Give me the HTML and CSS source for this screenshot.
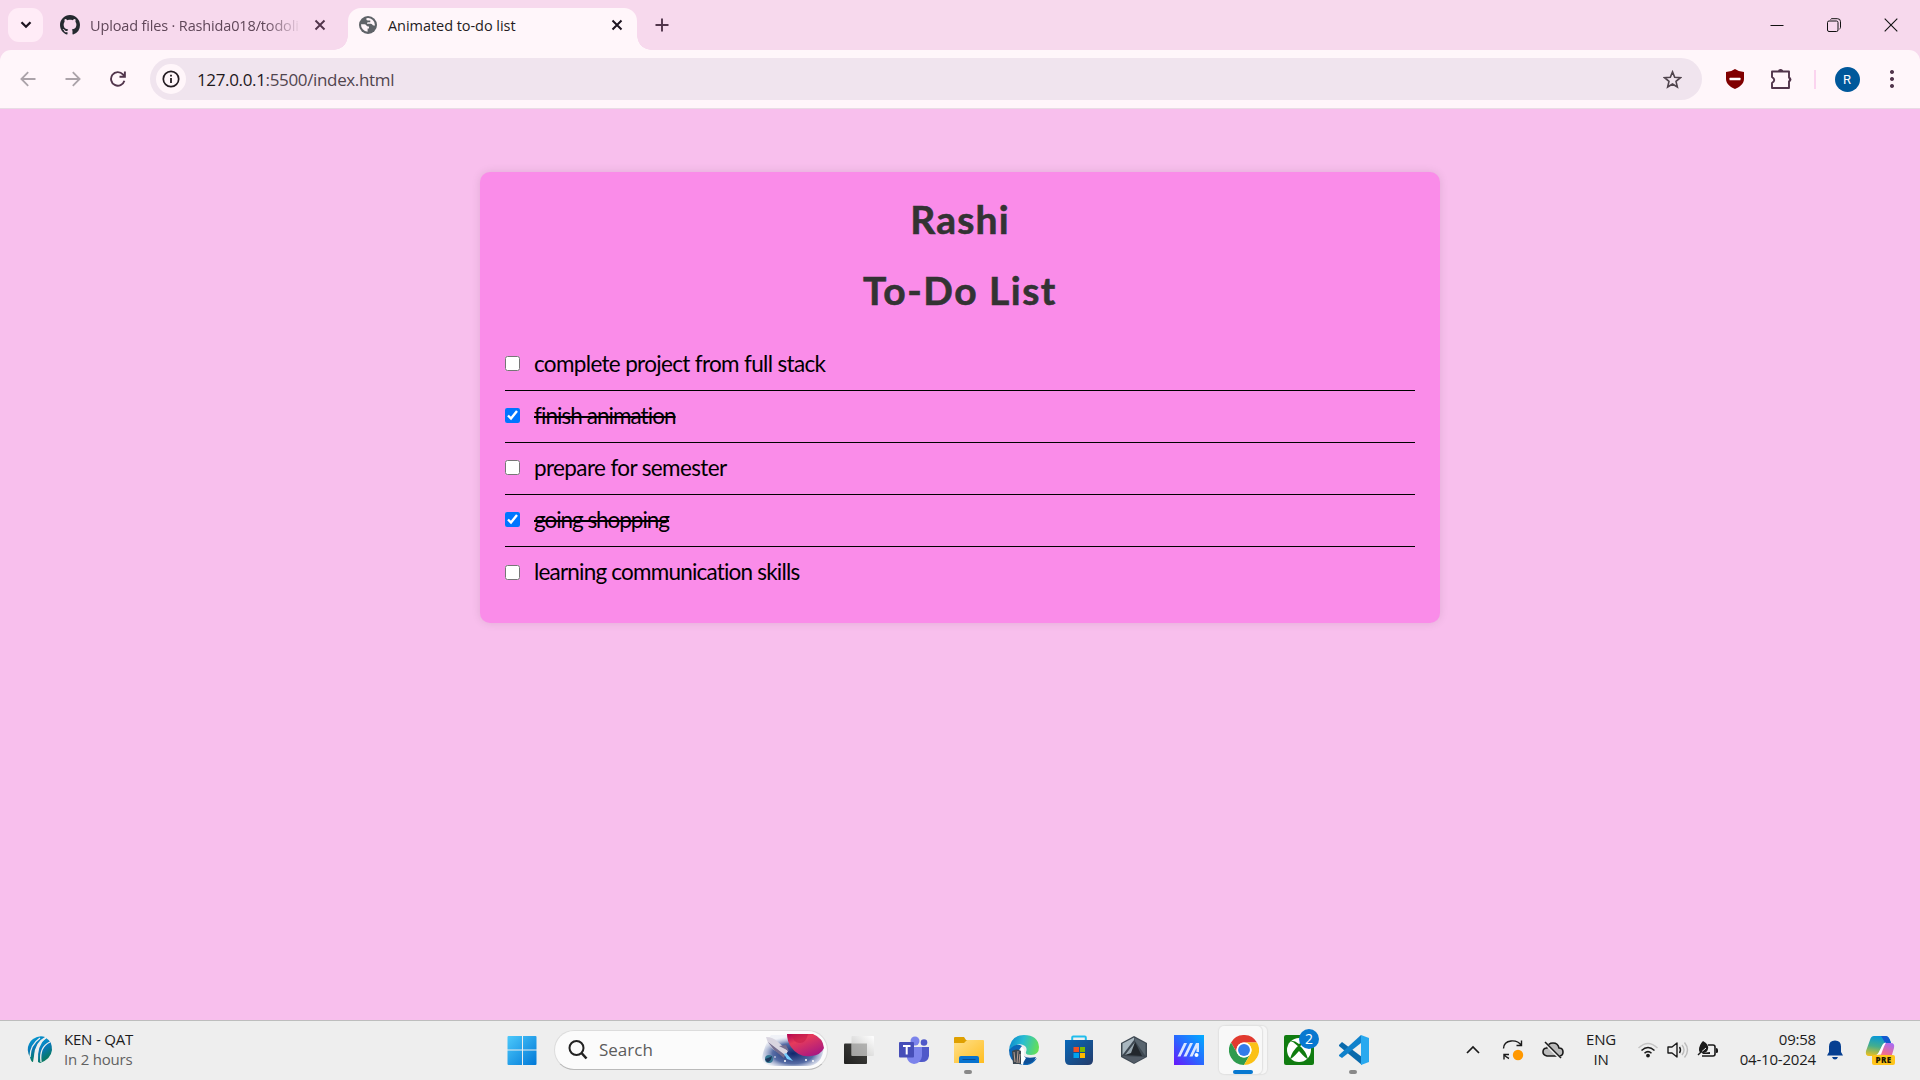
FILE: index.html
```html
<!DOCTYPE html>
<html lang="en">
<head>
<meta charset="utf-8">
<title>Animated to-do list</title>
<link rel="stylesheet" href="styles.css">
</head>
<body>
<header class="tabstrip">
  <button class="tab-search"><svg width="12" height="8" viewBox="0 0 12 8"><path d="M1.5 1.2 6 5.7l4.500-4.500" fill="none" stroke="#1d1420" stroke-width="2.300"/></svg></button>
  <div class="tab">
    <svg width="20" height="20" viewBox="0 0 16 16"><path fill="#24292f" d="M8 0C3.580 0 0 3.580 0 8c0 3.540 2.290 6.530 5.470 7.590.4.070.55-.17.55-.38 0-.19-.01-.82-.01-1.490-2.010.37-2.530-.49-2.690-.94-.09-.23-.48-.94-.82-1.130-.28-.15-.68-.52-.01-.53.63-.01 1.080.58 1.230.82.72 1.210 1.870.87 2.330.66.070-.52.28-.87.51-1.070-1.780-.2-3.640-.89-3.640-3.950 0-.87.31-1.590.82-2.150-.08-.2-.36-1.020.08-2.120 0 0 .67-.21 2.200.82.64-.18 1.320-.27 2-.27s1.360.09 2 .27c1.530-1.040 2.200-.82 2.200-.82.44 1.100.16 1.920.08 2.120.51.56.82 1.270.82 2.150 0 3.070-1.870 3.750-3.650 3.950.29.25.54.73.54 1.480 0 1.070-.01 1.930-.01 2.200 0 .21.15.46.55.38A8 8 0 0 0 16 8c0-4.420-3.580-8-8-8z"/></svg>
    <span class="tab-title tab-title-faded">Upload files · Rashida018/todoli</span>
    <svg class="tab-close" width="12" height="12" viewBox="0 0 12 12"><path d="m1.500 1.500 9 9m0-9-9 9" stroke="#51354b" stroke-width="1.900"/></svg>
  </div>
  <div class="tab tab-active">
    <svg width="18" height="18" viewBox="0 0 18 18"><circle cx="9" cy="9" r="9" fill="#5f6368"/><path d="M2 8.300h3.500c1.700 0 1.800 2.200 3.500 2.200h1v1.900H8.600v3.300A7 7 0 0 1 2 8.300zM7.400 2.300c.1 1.500-.2 2.200 1.600 2.200h2.300V6.300H9.300c-1 0-1.300.5-1.300 1.500h3.700c1.700 0 1.500 1.900 3.500 1.600h.8a7 7 0 0 0-8.600-7.100z" fill="#fff6fa"/></svg>
    <span class="tab-title tab-title-active">Animated to-do list</span>
    <svg class="tab-close" width="12" height="12" viewBox="0 0 12 12"><path d="m1.500 1.500 9 9m0-9-9 9" stroke="#1d1420" stroke-width="2"/></svg>
  </div>
  <svg class="new-tab" width="14" height="14" viewBox="0 0 14 14"><path d="M7 .5v13M.5 7h13" stroke="#51354b" stroke-width="1.900"/></svg>
  <div class="window-controls">
    <svg width="14" height="14" viewBox="0 0 14 14"><path d="M.5 7.500h13" stroke="#111"/></svg>
    <svg width="14" height="14" viewBox="0 0 14 14"><rect x=".5" y="3" width="10.500" height="10.500" rx="1.500" fill="none" stroke="#111"/><path d="M3.500 1.500Q4 .7 5 .7h5.500q3 0 3 3V9.500q0 1-1 1.500" fill="none" stroke="#111"/></svg>
    <svg width="14" height="14" viewBox="0 0 14 14"><path d="m.7.700 12.600 12.600m0-12.600L.7 13.300" stroke="#111" stroke-width="1.100"/></svg>
  </div>
</header>
<nav class="toolbar">
  <div class="nav-buttons">
    <svg width="16" height="16" viewBox="0 0 16 16"><path d="M15.500 8H2M8.200 1.200 1.400 8l6.800 6.800" fill="none" stroke="#aba3a9" stroke-width="1.800"/></svg>
    <svg width="16" height="16" viewBox="0 0 16 16"><path d="M.5 8H14M7.800 1.200 14.600 8l-6.800 6.800" fill="none" stroke="#aba3a9" stroke-width="1.800"/></svg>
    <svg width="16" height="16" viewBox="0 0 16 16"><path d="M14.400 9.800A6.800 6.800 0 1 1 12.900 3.300L14.800 5.300M14.900.4v5.400H9.500" fill="none" stroke="#51354b" stroke-width="1.900"/></svg>
  </div>
  <div class="omnibox">
    <span class="site-info"><svg width="18" height="18" viewBox="0 0 18 18"><circle cx="9" cy="9" r="7.700" fill="none" stroke="#241c22" stroke-width="1.700"/><path d="M9 8v5M9 4.800v1.800" stroke="#241c22" stroke-width="1.800"/></svg></span>
    <span class="url"><span class="host">127.0.0.1</span>:5500/index.html</span>
    <svg class="star" width="19" height="19" viewBox="0 0 20 20"><path d="m10 2 2.300 5.600 6 .5-4.600 3.900 1.400 5.900L10 14.700l-5.100 3.200 1.400-5.900-4.600-3.900 6-.5z" fill="none" stroke="#51454e" stroke-width="1.700"/></svg>
  </div>
  <div class="extensions">
    <svg width="20" height="20" viewBox="0 0 20 20"><path d="M10 0q4 3 9 3v7c0 5-5 8.500-9 10-4-1.500-9-5-9-10V3q5 0 9-3z" fill="#800000"/><rect x="4.500" y="8.800" width="11" height="2.400" rx=".5" fill="#fff"/></svg>
    <svg width="22" height="22" viewBox="0 0 22 22"><path d="M2 3.500h17v6q2 2 0 4V20H2v-5q4.500-3 0-6z" fill="none" stroke="#51354b" stroke-width="1.900" stroke-linejoin="round"/><path d="M8 3.500a2.600 2.600 0 0 1 5.200 0zM19 9a2.500 2.500 0 0 1 0 5z" fill="#51354b"/></svg>
    <i class="divider"></i>
    <span class="avatar">R</span>
    <svg class="menu-dots" width="6" height="20" viewBox="0 0 6 20"><path fill="#51354b" d="M3 1a2 2 0 1 0 .01 0zM3 8a2 2 0 1 0 .01 0zM3 15a2 2 0 1 0 .01 0z"/></svg>
  </div>
</nav>
<main class="page">
  <section class="todo">
    <h1 class="heading heading-name">Rashi</h1>
    <h1 class="heading heading-list">To-Do List</h1>
    <ul class="items">
      <li class="item"><input class="check" type="checkbox"><span class="label label-1">complete project from full stack</span></li>
      <li class="item"><input class="check" type="checkbox" checked><span class="label label-2 done">finish animation</span></li>
      <li class="item"><input class="check" type="checkbox"><span class="label label-3">prepare for semester</span></li>
      <li class="item"><input class="check" type="checkbox" checked><span class="label label-4 done">going shopping</span></li>
      <li class="item"><input class="check" type="checkbox"><span class="label label-5">learning communication skills</span></li>
    </ul>
  </section>
</main>
<footer class="taskbar">
  <div class="widget">
    <svg width="28" height="30" viewBox="0 0 28 30"><defs><linearGradient id="icc" x1="0" x2=".4" y1="0" y2="1"><stop stop-color="#05a8dc"/><stop offset=".5" stop-color="#0878b8"/><stop offset="1" stop-color="#077a55"/></linearGradient></defs><g fill="url(#icc)"><path d="M7 4Q13 0 19 2 9 7 8 21L7 27Q5 27 4 22 0 15 3 9q1-3 4-5z"/><path d="M20 3q6 3 6 12-1 9-12 13l-2-1Q11 10 20 3z"/></g><path d="M4 22Q4 10 14 3M9 26Q8 10 20 3M15 27Q13 12 24 7" fill="none" stroke="#eee" stroke-width="1.300"/></svg>
    <div class="widget-text"><span class="widget-title">KEN - QAT</span><span class="widget-sub">In 2 hours</span></div>
  </div>
  <div class="apps">
    <svg class="start" width="30" height="30" viewBox="0 0 30 30"><defs><linearGradient id="win" x1="0" y1="0" x2="1" y2="1"><stop stop-color="#4cc9fb"/><stop offset="1" stop-color="#0078d7"/></linearGradient></defs><path fill="url(#win)" d="M1.500 1H15v13.500H.5V2q0-1 1-1zM16 1h12.500q1 0 1 1v12.500H16zM.5 15.500H15V30H1.500q-1 0-1-1zM16 15.500h13.500V29q0 1-1 1H16z"/></svg>
    <div class="search">
      <svg width="20" height="20" viewBox="0 0 20 20"><circle cx="8.500" cy="8" r="7" fill="none" stroke="#222" stroke-width="2"/><path d="m13.500 13 5 5.500" stroke="#222" stroke-width="2.600"/></svg>
      <span class="search-text">Search</span>
      <svg class="space" width="64" height="34" viewBox="0 0 64 34"><defs><linearGradient id="planet" x1="0" y1="0" x2=".7" y2="1"><stop stop-color="#b00050"/><stop offset=".35" stop-color="#e63b5b"/><stop offset="1" stop-color="#a81882"/></linearGradient><radialGradient id="night" cx=".5" cy=".6" r=".55"><stop stop-color="#10266c"/><stop offset=".6" stop-color="#566ca5"/><stop offset="1" stop-color="#dce1f0" stop-opacity=".35"/></radialGradient></defs><path d="M10 2h48q5 3 5 12-2 19-17 19H14Q2 33 1 25q2-12 9-23z" fill="url(#night)"/><path d="M26 1h26q10 4 11 14-3 7-13 8-12 2-20-9-4-6-4-13z" fill="url(#planet)"/><path d="M31 1q1 9 8 9 6 0 8-9" fill="#c21b48" opacity=".55"/><path d="M5 4q7 0 12 5l10 9-3 5-11-6Q7 12 5 4z" fill="#d9d5e0"/><path d="m7 9 17 13-1 3-10-8zM18 13l7-1 3 6z" fill="#756e90"/><path d="m25 20 7 8-6-2-3-5z" fill="#75ccff"/><circle cx="8" cy="26" r="4" fill="#347894"/><path d="M4 26q4-1 7-3-1 6-5 6" fill="#1d375d"/><g fill="#fff"><circle cx="14" cy="24" r=".8"/><circle cx="24" cy="28" r="1"/><circle cx="45" cy="27" r="1"/><circle cx="52" cy="28" r="1"/></g></svg>
    </div>
    <div class="app"><svg width="32" height="32" viewBox="0 0 32 32"><defs><linearGradient id="dk" x1="1" y1="0" x2="0" y2="1"><stop stop-color="#454542"/><stop offset="1" stop-color="#20201f"/></linearGradient><linearGradient id="lt" x1="0" y1="1" x2="1" y2="0"><stop stop-color="#c4c4c3"/><stop offset="1" stop-color="#fff"/></linearGradient></defs><rect x="1" y="9.500" width="23" height="20.500" rx="1" fill="url(#dk)"/><rect x="8.500" y="2" width="22.500" height="20" rx="1" fill="url(#lt)"/><path d="M8.500 9.500H24V22H8.500z" fill="#8c8c8a" opacity=".6"/></svg></div>
    <div class="app"><svg width="30" height="30" viewBox="0 0 30 30"><circle cx="16" cy="6" r="4.500" fill="#7b83eb"/><circle cx="25" cy="7.500" r="3.300" fill="#5059c9"/><path d="M20 12h10v9q-1 6-7 6h-3z" fill="#5059c9"/><path d="M9 12h14v9q-1 7-8 8-6-1-7-6z" fill="#7b83eb"/><rect y="7" width="15" height="15.500" rx="1" fill="#464eb8"/><path d="M4 11h7.500M7.700 11v8.500" stroke="#fff" stroke-width="2"/></svg></div>
    <div class="app running"><svg width="30" height="28" viewBox="0 0 30 28"><defs><linearGradient id="fd" x1="0" y1="0" x2="1" y2="1"><stop stop-color="#ffe08a"/><stop offset="1" stop-color="#ffbd20"/></linearGradient></defs><path d="M1 1h9l2 3h17v8H0V2q0-1 1-1z" fill="#dfa000"/><path d="M0 7h10l3-3h16q1 0 1 1v22H0z" fill="url(#fd)"/><path d="M5 27v-5q0-2 2-2h16q2 0 2 2v5z" fill="#0873cf"/><path d="M8.500 23.500h13" stroke="#0b4d91"/></svg></div>
    <div class="app"><svg width="30" height="30" viewBox="0 0 30 30"><defs><linearGradient id="ed" x1="0" y1=".3" x2="1" y2=".5"><stop stop-color="#0b89ce"/><stop offset=".45" stop-color="#29bdd2"/><stop offset="1" stop-color="#64df57"/></linearGradient></defs><path d="M0 16Q1 0 15 0q14 0 15 12 0 8-8 8-6 0-5-3 2-5-3-7Q8 7 0 16z" fill="url(#ed)"/><path d="M0 15Q7 7 13 11q-8 9 1 14 8 3 14-2-5 8-13 7Q0 29 0 15z" fill="#0c67b7"/><path d="M13 15q-1 10 14 7-3 7-11 7-9-4-3-14z" fill="#0d5098"/><path d="M3 16q5-3 9 0v13H4z" fill="#3b4750"/><path d="m5 17 1 10m3-11-1 12m3-9-1 9" stroke="#c9aa9d" stroke-width=".9"/><path d="M12 12q4 1 3 6-1 3 2 5-3 4-3 7l-2-1z" fill="#fff"/></svg></div>
    <div class="app"><svg width="30" height="30" viewBox="0 0 30 30"><defs><linearGradient id="st" x1="0" y1="0" x2="1" y2="1"><stop stop-color="#0868b9"/><stop offset="1" stop-color="#243b6a"/></linearGradient></defs><path d="M8.200 6V2.500q0-1 1-1h11.600q1 0 1 1V6" fill="none" stroke="#20bdec" stroke-width="2"/><path d="M1 5h28v20q0 5-5 5H6q-5 0-5-5z" fill="url(#st)"/><path fill="#f25022" d="M9.500 12H15v5H9.500z"/><path fill="#7fba00" d="M16 12h5v5h-5z"/><path fill="#00a4ef" d="M9.500 18H15v5H9.500z"/><path fill="#ffb900" d="M16 18h5v5h-5z"/></svg></div>
    <div class="app"><svg width="30" height="30" viewBox="0 0 30 30"><path d="m15 1 13 7v14l-13 7-13-7V8z" fill="#3e4852"/><path d="M15 2.500 3.500 8.500V20L15 5z" fill="#a9b7c0"/><path d="m15 2.500 11.500 6V21L16 6z" fill="#59656f"/><path d="M16 7 6 20l17 1z" fill="#22272d"/><path d="M16 7 6 20l6-2z" fill="#98a6af"/><path d="m3 21 20 1 3 0-11 6z" fill="#535c67"/></svg></div>
    <div class="app"><svg width="30" height="30" viewBox="0 0 30 30"><defs><linearGradient id="ma" x1="0" y1="1" x2="1" y2="0"><stop stop-color="#6915fb"/><stop offset=".45" stop-color="#2d62ff"/><stop offset="1" stop-color="#00adff"/></linearGradient></defs><path fill="url(#ma)" d="M0 0h30v30H0z"/><path d="M3.500 21.500 10 8h3L6.500 21.500zM9.500 21.500 16 8h3l-6.500 13.500zM15.500 21.500 22 8h3v9h-2.500v-4l-4 8.500z" fill="#d9e6ff"/><circle cx="22.500" cy="20" r="2" fill="#fff"/></svg></div>
    <div class="app app-open"><svg width="30" height="30" viewBox="0 0 48 48"><circle cx="24" cy="24" r="24" fill="#fff"/><path d="M3.200 12A24 24 0 0 1 44.800 12H24a12 12 0 0 0-10.400 18z" fill="#e13a2f"/><path d="M3.200 12A24 24 0 0 0 24 48l10.400-18a12 12 0 0 1-20.800 0z" fill="#2e9b4d"/><path d="M44.800 12A24 24 0 0 1 24 48l10.400-18A12 12 0 0 0 24 12z" fill="#fbc116"/><circle cx="24" cy="24" r="12" fill="#fff"/><circle cx="24" cy="24" r="9.500" fill="#327cea"/></svg></div>
    <div class="app"><svg width="30" height="30" viewBox="0 0 30 30"><rect width="30" height="30" rx="2" fill="#107c10"/><circle cx="15" cy="15" r="12" fill="#fff"/><path d="M6 6q4-1 9 3 5-4 9-3l-3 1-6 5-6-5zM6 24q2-8 9-14 7 6 9 14-2 0-9-8-7 8-9 8z" fill="#107c10"/></svg><b class="badge">2</b></div>
    <div class="app running"><svg width="30" height="30" viewBox="0 0 30 30"><path d="M0 10 3 7l20 15v8L0 11z" fill="#0869ac"/><path d="M0 20 22 0v8L3 23l-3-2z" fill="#1081cb"/><path d="m22 0 8 3v24l-8 3z" fill="#29a9ef"/></svg></div>
  </div>
  <div class="tray">
    <svg width="14" height="9" viewBox="0 0 14 9"><path d="m1 8 6-6 6 6" fill="none" stroke="#1a1a1a" stroke-width="1.700"/></svg>
    <svg width="22" height="22" viewBox="0 0 22 22"><path d="M1.500 9.500C2 0 15 0 19.500 6.500M19.500 1.500v5h-5M7 19.500Q3.500 18 2 15.500m0 5v-5h5" fill="none" stroke="#1a1a1a" stroke-width="1.400"/><circle cx="16" cy="16" r="5.200" fill="#ff9800"/></svg>
    <svg width="22" height="20" viewBox="0 0 22 20"><path d="M5 16q-4-1-4-4 0-4 4-4 1-5 6-5t6 5q4 0 4 4t-4 4z" fill="#bbb" stroke="#1a1a1a" stroke-width="1.600"/><path d="m4 4 14 14" stroke="#eee" stroke-width="3"/><path d="m3 2 16 16" stroke="#1a1a1a" stroke-width="1.600"/></svg>
    <div class="lang"><span>ENG</span><span>IN</span></div>
    <svg width="22" height="16" viewBox="0 0 22 16"><path d="M1.500 6q9.500-9 19 0" fill="none" stroke="#c5c5c5" stroke-width="1.500"/><path d="M4.500 8.500q6.500-6 13 0M7.500 11.300q3.500-3.300 7 0" fill="none" stroke="#1a1a1a" stroke-width="1.500"/><circle cx="11" cy="13.600" r="1.900" fill="#1a1a1a"/></svg>
    <svg width="22" height="18" viewBox="0 0 22 18"><path d="M1 6h4l5-4v14l-5-4H1z" fill="none" stroke="#1a1a1a" stroke-width="1.400" stroke-linejoin="round"/><path d="M12.500 6q2 3 0 6" fill="none" stroke="#1a1a1a" stroke-width="1.400"/><path d="M15 4q4 5 0 10M17.500 1.500q6 7.500 0 15" fill="none" stroke="#bcbcbc" stroke-width="1.400"/></svg>
    <svg width="22" height="20" viewBox="0 0 22 20"><path d="M11 5h5q2 0 2 2v7q0 2-2 2H5" fill="none" stroke="#1a1a1a" stroke-width="1.600"/><path d="M19 8q2 0 2 2v2q0 1-2 1z" fill="#1a1a1a"/><path d="M6 1q6 3 5 8-1 4-5 4-4 0-4-3 0-5 4-9z" fill="#1a1a1a"/><path d="m5 13 8-1v2H6z" fill="#1a1a1a"/><path d="m1 15 8-7" stroke="#eee"/><path d="m1 15 4-4" stroke="#1a1a1a" stroke-width="1.400"/></svg>
    <div class="clock"><span>09:58</span><span class="date">04-10-2024</span></div>
    <svg width="16" height="20" viewBox="0 0 16 20"><path d="M8 .5q6 0 6 6V12l2 3.500H0L2 12V6.500q0-6 6-6z" fill="#063f91"/><path d="M5 17h6q-1 2.500-3 2.500T5 17z" fill="#063f91"/></svg>
    <div class="copilot"><svg width="30" height="28" viewBox="0 0 30 28"><defs><linearGradient id="c1" x1=".4" y1="0" x2=".2" y2="1"><stop stop-color="#0798d7"/><stop offset=".5" stop-color="#44ae8d"/><stop offset="1" stop-color="#efc01d"/></linearGradient><linearGradient id="c2" x1=".8" y1="0" x2=".3" y2="1"><stop stop-color="#a96cf2"/><stop offset=".5" stop-color="#f06b91"/><stop offset="1" stop-color="#ffa25b"/></linearGradient></defs><path d="M9 0h12q3 0 5 7h-5q-3 0-5 5l-3 6q-1 2-4 2H4q-4 0-3-5L5 4q1-4 4-4z" fill="url(#c1)"/><path d="M16 0h5q3 0 5 7h-6q-3-6-4-7z" fill="#1459cf"/><path d="M21 7h5q4 0 3 5l-3 10q-1 5-5 5H10q-3-1-3-7h3q3 0 5-5l3-6q1-2 3-2z" fill="url(#c2)"/><path d="M10 19q3 0 5-5l3-6q1-1.500 3-1.500l-2 4-3 8z" fill="#fff"/></svg><span class="pre">PRE</span></div>
  </div>
</footer>
</body>
</html>
```
FILE: styles.css
```css
* { box-sizing: border-box; }
body {
  margin: 0;
  width: 1920px;
  height: 1080px;
  overflow: hidden;
  display: flex;
  flex-direction: column;
  background: #f7d9ed;
  font-family: "Open Sans", "Noto Sans", sans-serif;
}
svg { display: block; flex: none; }

.tabstrip { height: 50px; flex: none; display: flex; padding: 8px 0 0 8px; }
.tab-search {
  width: 35px; height: 34px; padding: 0; border: 0; border-radius: 11px;
  background: #ffecf7; display: flex; align-items: center; justify-content: center;
}
.tab { width: 289px; display: flex; align-items: center; padding: 0 14px 8px 11px; color: #604759; margin-left: 6px; }
.tab:nth-child(2) { width: 299px; padding-right: 22px; }
.tab-title { margin-left: 11px; font-size: 14.500px; letter-spacing: -0.150px; white-space: nowrap; line-height: 20px; margin-top: 1px; }
.tab-title-active { letter-spacing: -0.050px; }
.tab-title-faded {
  margin-left: 10px;
  -webkit-mask-image: linear-gradient(90deg, #000 175px, transparent 212px);
  mask-image: linear-gradient(90deg, #000 175px, transparent 212px);
}
.tab-close { margin-left: auto; }
.tab-active { margin-left: 0; height: 42px; background: #fff6fa; color: #241c22; border-radius: 13px 13px 0 0; position: relative; }
.tab-active::before, .tab-active::after {
  content: ""; position: absolute; bottom: 0; width: 14px; height: 14px;
}
.tab-active::before { left: -14px; background: radial-gradient(circle at 0 0, transparent 13.500px, #fff6fa 14px); }
.tab-active::after { right: -14px; background: radial-gradient(circle at 100% 0, transparent 13.500px, #fff6fa 14px); }
.new-tab { margin: 10px 0 0 18px; }
.window-controls { margin: 0 22px 0 auto; display: flex; gap: 43px; align-items: center; height: 34px; }

.toolbar {
  height: 59px; flex: none; display: flex; align-items: center; background: #fff6fa;
  border-bottom: 1px solid #e8dce4; border-radius: 11px 11px 0 0;
}
.nav-buttons { width: 150px; flex: none; display: flex; gap: 29px; padding-left: 20px; }
.omnibox {
  width: 1552px; flex: none; height: 42px; border-radius: 21px; background: #f0e4ee;
  display: flex; align-items: center; padding: 0 20px 0 6px;
}
.site-info { width: 30px; height: 30px; border-radius: 50%; background: #fff6fa; display: flex; align-items: center; justify-content: center; }
.url { margin-left: 11px; font-size: 17px; letter-spacing: -0.350px; color: #51454e; }
.host { color: #1e181c; }
.star { margin-left: auto; }
.extensions { flex: 1; display: grid; grid-template-columns: 66px 26px 41px 24px 61px; align-items: center; justify-items: center; }
.menu-dots { margin-left: 5px; }
.divider { width: 2px; height: 19px; background: #fbd4ef; }
.avatar { width: 25px; height: 25px; border-radius: 50%; background: #00589b; color: #fff; font: 13px/25px Roboto, sans-serif; text-align: center; }

.page { flex: 1; background: #f8bfed; padding-top: 63px; }
.todo {
  width: 960px; height: 451px; margin: 0 auto; padding: 24px 25px 26px;
  background: #fa8ce9; border-radius: 10px; box-shadow: 0 0 10px rgba(0, 0, 0, .1);
  font-family: Lato, "Open Sans", sans-serif;
}
.heading {
  margin: 0; height: 71px; line-height: 46px; font-size: 39px; font-weight: 700; color: #333; text-align: center;
  letter-spacing: 1.200px; -webkit-text-stroke: .6px #333;
}
.heading-list { height: 72px; letter-spacing: 1.500px; }
.items { list-style: none; margin: 0; padding: 0; }
.item { height: 52px; display: flex; align-items: center; border-bottom: 1px solid #000; }
.item:last-child { border: 0; }
.check { width: 15px; height: 15px; margin: 0 14px 2px 0; }
.label { font-size: 22.500px; line-height: 30px; margin-bottom: 2px; color: #000; white-space: nowrap; font-variant-ligatures: none; }
.label-1 { letter-spacing: -0.670px; }
.label-2 { letter-spacing: -0.950px; }
.label-3 { letter-spacing: -0.620px; }
.label-4 { letter-spacing: -1.050px; }
.label-5 { letter-spacing: -0.800px; }
.done { text-decoration: line-through; text-decoration-thickness: 2px; }

.taskbar { height: 60px; flex: none; background: #eee; border-top: 1px solid #bdbdbd; display: flex; align-items: center; padding-bottom: 2px; }
.widget { width: 507px; padding-left: 26px; display: flex; align-items: center; gap: 10px; }
.widget-text, .lang, .clock { display: flex; flex-direction: column; font-size: 15px; line-height: 20px; letter-spacing: -0.200px; margin-bottom: 2px; }
.widget-title { color: #1c1c1c; }
.widget-sub { color: #616161; }
.apps { display: flex; align-items: center; height: 57px; }
.search {
  width: 274px; height: 40px; margin: 0 3px 0 17px; padding: 0 2px 0 13px; border: 1px solid #dcdcdc; border-bottom-color: #bababa;
  border-radius: 20px; background: #fbfbfb; display: flex; align-items: center;
}
.search-text { margin-left: 11px; font-size: 17px; color: #5c5c5c; }
.space { margin-left: auto; border-radius: 0 17px 17px 0; }
.app { width: 55px; height: 57px; display: flex; align-items: center; justify-content: center; position: relative; }
.running::after, .app-open::after { content: ""; position: absolute; left: 23px; bottom: 4px; width: 8px; height: 4px; border-radius: 2px; background: #888; }
.app-open::before {
  content: ""; position: absolute; left: 3px; top: 5px; width: 43px; height: 48px; border-radius: 5px;
  background: #f8f8f8; box-shadow: 0 0 1px 1px #e2e2e2, 5px 0 0 #f6f6f6, 5px 0 1px 1px #e2e2e2;
}
.app-open svg { position: relative; }
.app-open::after { left: 17px; width: 20px; background: #0878d0; }
.badge { position: absolute; left: 28px; top: 8px; width: 20px; height: 20px; border-radius: 50%; background: #0878d0; color: #fff; font-size: 14px; font-weight: 400; line-height: 20px; text-align: center; }
.tray {
  margin-left: auto; height: 57px; display: grid; align-items: center; justify-items: center; justify-content: start;
  grid-template-columns: 40px 40px 40px 56px 38px 22px 38px 89px 38px 52px; width: 467px;
}
.lang, .clock { color: #1c1c1c; }
.lang { align-items: center; }
.clock { align-items: flex-end; justify-self: end; }
.copilot { position: relative; }
.pre { position: absolute; left: 7px; top: 19px; width: 23px; height: 10px; border-radius: 2px; background: #ffc51b; color: #201800; font-size: 8px; font-weight: 800; line-height: 10px; text-align: center; letter-spacing: .3px; }
```
